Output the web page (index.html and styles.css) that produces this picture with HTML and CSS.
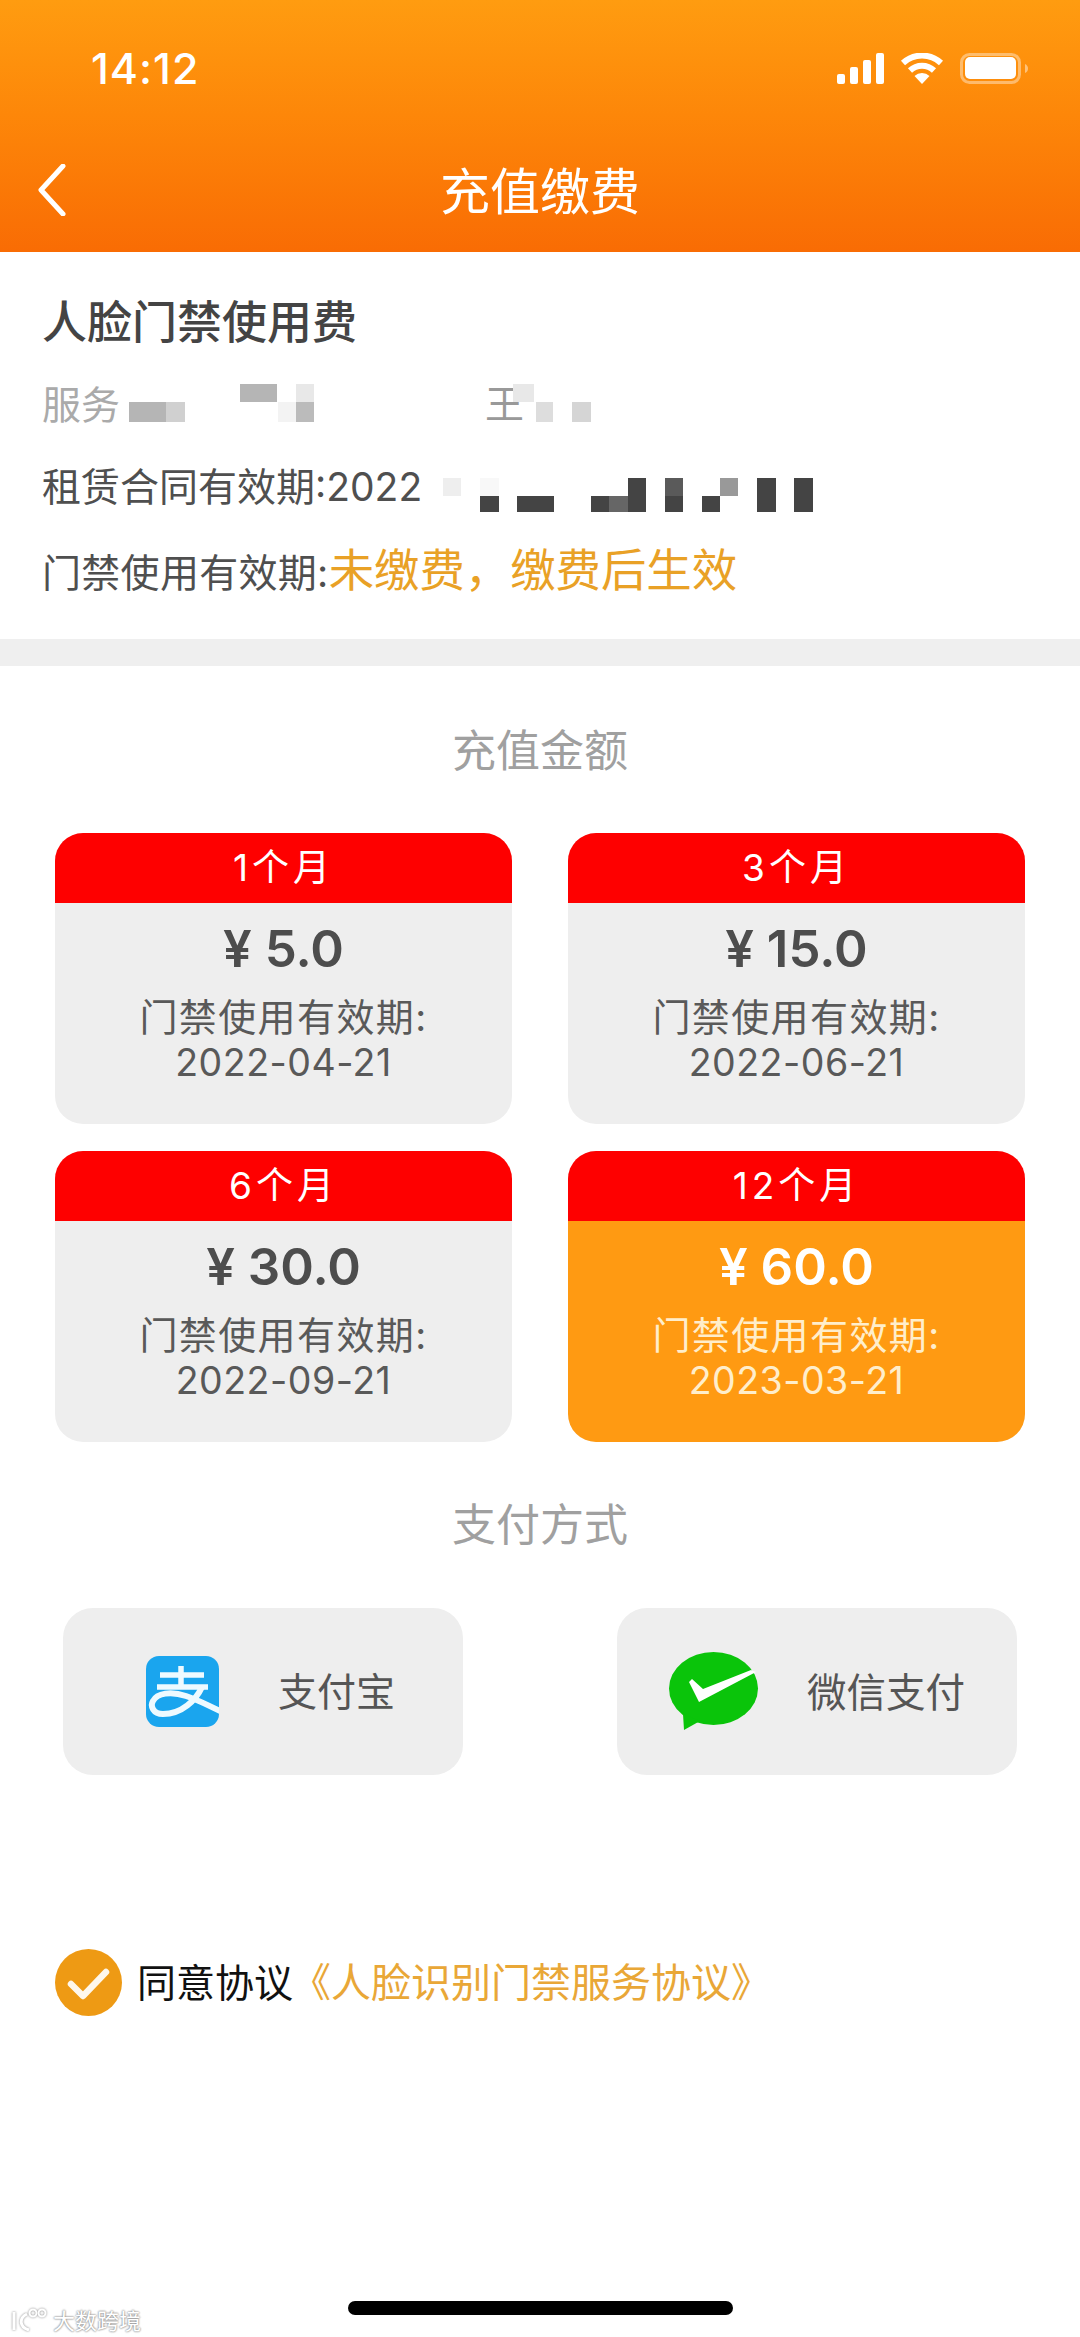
FILE: index.html
```html
<!DOCTYPE html>
<html lang="zh-CN">
<head>
<meta charset="utf-8">
<title>充值缴费</title>
<link rel="stylesheet" href="styles.css">
</head>
<body>
<div class="page">
  <header class="header">
    <div class="status">
      <span class="time">14:12</span>
      <div class="status-icons">
        <svg class="ic-signal" viewBox="0 0 47 31"><rect x="0" y="21" width="8" height="10" rx="2"/><rect x="13" y="14" width="8" height="17" rx="2"/><rect x="26" y="7" width="8" height="24" rx="2"/><rect x="39" y="0" width="8" height="31" rx="2"/></svg>
        <svg class="ic-wifi" viewBox="0 0 44 31"><path d="M22 31 14.500 23a11 11 0 0 1 15 0Z" fill="#fff"/><path d="M10 17.500a17.500 17.500 0 0 1 24 0M3 10a28 28 0 0 1 38 0" fill="none" stroke="#fff" stroke-width="6"/></svg>
        <svg class="ic-battery" viewBox="0 0 68 31"><rect x="1.500" y="1.500" width="58" height="28" rx="8" fill="none" stroke="#fff" stroke-opacity=".4" stroke-width="3"/><rect x="5" y="4" width="51" height="22" rx="5" fill="#fff"/><path d="M65 11c2 1 3 2.500 3 4.500s-1 3.500-3 4.500Z" fill="#fff" fill-opacity=".45"/></svg>
      </div>
    </div>
    <nav class="nav">
      <svg class="ic-back" viewBox="0 0 30 52"><path d="M26 2 4 26l22 24" fill="none" stroke="#fff" stroke-width="5" stroke-linecap="round" stroke-linejoin="round"/></svg>
      <h1 class="nav-title">充值缴费</h1>
    </nav>
  </header>

  <section class="info">
    <h2 class="info-title">人脸门禁使用费</h2>
    <div class="info-row muted">服务<span class="name">王</span>
      <svg class="mosaic" viewBox="0 0 1080 82"><g fill="#b5b5b5"><rect x="129" y="41" width="37" height="20"/><rect x="240" y="23" width="37" height="18"/><rect x="296" y="41" width="18" height="20" fill="#bbb"/></g><rect x="166" y="41" width="19" height="20" fill="#d0d0d0"/><rect x="296" y="23" width="18" height="18" fill="#e8e8e8"/><rect x="278" y="41" width="18" height="20" fill="#f3f3f3"/><rect x="513" y="23" width="21" height="18" fill="#e8e8e8"/><rect x="536" y="41" width="17" height="20" fill="#ddd"/><rect x="572" y="41" width="19" height="20" fill="#d5d5d5"/></svg>
    </div>
    <div class="info-row contract">租赁合同有效期:2022
      <svg class="mosaic" viewBox="0 0 1080 82"><rect x="443" y="35" width="18" height="18" fill="#eee"/><rect x="480" y="35" width="19" height="18" fill="#f8f8f8"/><g fill="#444"><rect x="480" y="53" width="19" height="16"/><rect x="517" y="53" width="37" height="16"/><rect x="591" y="53" width="18" height="16"/><rect x="628" y="35" width="18" height="34"/><rect x="665" y="53" width="18" height="16"/><rect x="702" y="53" width="18" height="16"/><rect x="757" y="35" width="19" height="34"/><rect x="794" y="35" width="19" height="34"/></g><rect x="609" y="53" width="19" height="16" fill="#666"/><rect x="665" y="35" width="18" height="18" fill="#5a5a5a"/><rect x="720" y="35" width="18" height="18" fill="#999"/></svg>
    </div>
    <div class="info-row access">门禁使用有效期:<span class="warn">未缴费，缴费后生效</span></div>
  </section>

  <div class="band"></div>

  <h3 class="sec-title first">充值金额</h3>
  <div class="plans">
    <article class="plan">
      <div class="plan-head">1个月</div>
      <div class="plan-body"><div class="price">¥ 5.0</div><div class="valid">门禁使用有效期:</div><div class="date">2022-04-21</div></div>
    </article>
    <article class="plan">
      <div class="plan-head">3个月</div>
      <div class="plan-body"><div class="price">¥ 15.0</div><div class="valid">门禁使用有效期:</div><div class="date">2022-06-21</div></div>
    </article>
    <article class="plan">
      <div class="plan-head">6个月</div>
      <div class="plan-body"><div class="price">¥ 30.0</div><div class="valid">门禁使用有效期:</div><div class="date">2022-09-21</div></div>
    </article>
    <article class="plan selected">
      <div class="plan-head">12个月</div>
      <div class="plan-body"><div class="price">¥ 60.0</div><div class="valid">门禁使用有效期:</div><div class="date">2023-03-21</div></div>
    </article>
  </div>

  <h3 class="sec-title second">支付方式</h3>
  <div class="pays">
    <div class="pay">
      <svg class="ic-alipay" viewBox="0 0 73 71"><defs><clipPath id="ali"><rect width="73" height="71" rx="13"/></clipPath></defs><g clip-path="url(#ali)"><rect width="73" height="71" fill="#1aa5ee"/><path d="M35 10v21M14 19h44M11 31h51" fill="none" stroke="#eefaff" stroke-width="5.500"/><path d="M56 31C50 44 36 58 17 58 7 58 4 50 7 45 11 37 25 35 40 40 52 44 64 50 78 57" fill="none" stroke="#eefaff" stroke-width="6"/></g></svg>
      <span class="pay-name">支付宝</span>
    </div>
    <div class="pay">
      <svg class="ic-wechat" viewBox="0 0 90 79"><ellipse cx="44.500" cy="36.500" rx="44.500" ry="36.500" fill="#0ac40a"/><path d="M14 62 15 78 31 69Z" fill="#0ac40a"/><path d="M20 30 23 27 34 37 82 18 87 20 30 50Z" fill="#fff"/></svg>
      <span class="pay-name wide">微信支付</span>
    </div>
  </div>

  <div class="agree">
    <svg class="ic-check" viewBox="0 0 67 67"><circle cx="33.500" cy="33.500" r="33.500" fill="#ee9a14"/><path d="M16 35 28 47 51 23" fill="none" stroke="#fff" stroke-width="6.500" stroke-linecap="round" stroke-linejoin="round" stroke-opacity=".92"/></svg>
    <span class="agree-text">同意协议</span>
    <span class="agree-link">《人脸识别门禁服务协议》</span>
  </div>

  <div class="home-bar"></div>

  <div class="watermark">
    <svg class="wm-logo" viewBox="0 0 40 24"><path d="M5 5v18M18 7C10 11 10 20 20 23" fill="none" stroke="#fff" stroke-width="3"/><circle cx="24" cy="6" r="3.500" fill="none" stroke="#fff" stroke-width="2"/><circle cx="33" cy="6" r="3.500" fill="none" stroke="#fff" stroke-width="2"/></svg>
    <span>大数跨境</span>
  </div>
</div>
</body>
</html>
```

FILE: styles.css
```css
* { box-sizing: border-box; margin: 0; padding: 0; }
html, body { background: #fff; }
body {
  font-family: "Inter", "Noto Sans CJK SC", sans-serif;
  color: #4f4f4f;
}
.page { position: relative; width: 1080px; height: 2337px; overflow: hidden; background: #fff; }

/* header */
.header {
  height: 252px;
  background: linear-gradient(180deg, #ff9c10 0%, #fd8709 45%, #f96c04 100%);
  color: #fff;
}
.status {
  height: 136px;
  padding: 0 52px 0 91px;
  display: flex;
  align-items: center;
  justify-content: space-between;
}
.time { font-size: 43px; font-weight: 500; letter-spacing: 1px; }
.status-icons { display: flex; align-items: center; gap: 16px; }
.ic-signal { width: 47px; height: 31px; fill: #fff; }
.ic-wifi { width: 44px; height: 31px; }
.ic-battery { width: 68px; height: 31px; }
.nav {
  position: relative;
  height: 104px;
  display: flex;
  align-items: center;
  justify-content: center;
}
.ic-back { position: absolute; left: 37px; top: 28px; width: 30px; height: 52px; }
.nav-title { font-size: 50px; font-weight: 400; font-family: "Noto Sans CJK SC", sans-serif; line-height: 1; }

/* info */
.info { padding: 27px 42px 32px; }
.info-title { font-size: 45px; font-weight: 500; line-height: 82px; font-family: "Noto Sans CJK SC", sans-serif; color: #444; }
.info-row {
  position: relative;
  height: 82px;
  line-height: 82px;
  font-size: 39px;
  font-family: "Inter", "Noto Sans CJK SC", sans-serif;
  color: #4f4f4f;
}
.info-row.muted { color: #aaa; padding-top: 3px; }
.info-row.contract { padding-top: 3px; }
.info-row.access { padding-top: 5px; letter-spacing: 0.3px; }
.name { position: absolute; left: 443px; top: 2px; color: #999; }
.warn { font-size: 45.400px; letter-spacing: 0; color: #e9a126; }
.mosaic { position: absolute; left: -42px; top: 0; width: 1080px; height: 82px; }
.band { height: 27px; background: #efefef; }

/* section titles */
.sec-title {
  font-size: 44px;
  font-weight: 400;
  line-height: 60px;
  text-align: center;
  color: #a0a0a0;
  font-family: "Noto Sans CJK SC", sans-serif;
}
.sec-title.first { margin-top: 52px; padding-bottom: 1px; }
.sec-title.second { margin-top: 50px; padding-bottom: 2px; }

/* plans */
.plans {
  margin: 54px 55px 0;
  display: grid;
  grid-template-columns: 457px 457px;
  column-gap: 56px;
  row-gap: 27px;
}
.plan { height: 291px; border-radius: 28px; overflow: hidden; background: #eeeeee; }
.plan-head {
  height: 70px;
  line-height: 70px;
  background: #fe0000;
  color: #fff;
  text-align: center;
  font-size: 37px;
  letter-spacing: 4px;
}
.plan-body { padding-top: 16px; text-align: center; }
.price { height: 60px; line-height: 60px; font-size: 51px; font-weight: 600; color: #4d4d4d; margin-bottom: 15px; }
.valid { line-height: 46px; font-size: 38px; letter-spacing: 1.4px; color: #595959; }
.date { line-height: 46px; font-size: 37.500px; letter-spacing: 0.5px; color: #595959; }
.plan.selected .plan-body { background: #ff9a12; height: 221px; }
.plan.selected .price { color: #fff; }
.plan.selected .valid, .plan.selected .date { color: #ffeecb; }

/* pay */
.pays {
  margin: 54px 63px 0;
  display: flex;
  gap: 154px;
}
.pay {
  width: 400px;
  height: 167px;
  border-radius: 30px;
  background: #eeeeee;
  display: flex;
  align-items: center;
}
.pay-name { font-size: 39px; color: #555; font-family: "Noto Sans CJK SC", sans-serif; padding-bottom: 5px; }
.pay-name.wide { font-size: 39.500px; }
.ic-alipay { width: 73px; height: 71px; margin-left: 83px; margin-right: 59px; }
.ic-wechat { width: 90px; height: 79px; margin-left: 52px; margin-right: 48px; }

/* agree */
.agree {
  margin: 174px 0 0 55px;
  height: 67px;
  display: flex;
  align-items: center;
  font-family: "Noto Sans CJK SC", sans-serif;
  font-size: 39px;
}
.ic-check { width: 67px; height: 67px; margin-right: 15px; }
.agree-text { color: #111; padding-bottom: 6px; }
.agree-link { color: #e9a737; font-size: 40px; margin-left: -2px; padding-bottom: 6px; }

.home-bar {
  margin: 285px 0 0 348px;
  width: 385px;
  height: 14px;
  border-radius: 7px;
  background: #000;
}
.watermark {
  position: absolute;
  left: 9px;
  bottom: 4px;
  display: flex;
  align-items: center;
  gap: 4px;
  color: #fff;
  font-family: "Noto Sans CJK SC", sans-serif;
  font-size: 22px;
  line-height: 28px;
  text-shadow: 0 0 2px #888, 0 0 2px #888;
}
.wm-logo { width: 40px; height: 24px; filter: drop-shadow(0 0 1px #888); }
```
